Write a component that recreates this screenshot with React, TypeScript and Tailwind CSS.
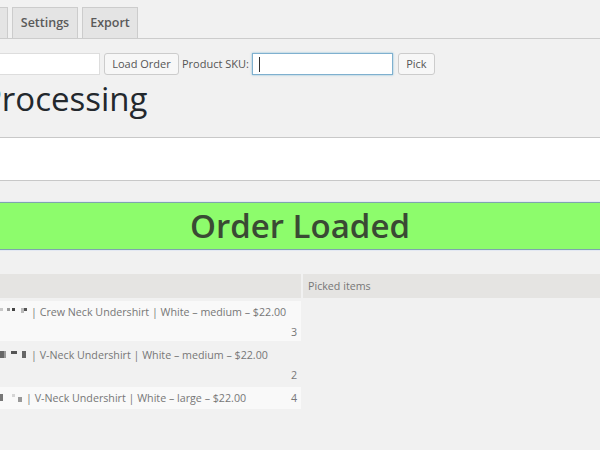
import React from "react";

function Blob({ w, c, h = 6, mt = 0, ml = 0 }: { w: number; c: string; h?: number; mt?: number; ml?: number }) {
  return <span className="inline-block shrink-0" style={{ width: w, height: h, background: c, marginTop: mt, marginLeft: ml }} />;
}

export default function App() {
  return (
    <div
      className="w-[600px] h-[450px] overflow-hidden bg-[#f1f1f1] text-[#555]"
      style={{ fontFamily: '"Open Sans", "Liberation Sans", sans-serif' }}
    >
      {/* Tabs */}
      <div className="flex items-end h-[39px] border-b border-[#cccccc] pt-[8px]">
        <div className="-ml-[62px] w-[70px] h-[31px] border border-b-0 border-[#cccccc] bg-[#e4e4e4]" />
        <div className="ml-[4px] w-[66px] h-[31px] border border-b-0 border-[#cccccc] bg-[#e4e4e4] flex items-center justify-center pt-[1px] text-[12.5px] font-semibold text-[#5a5a5a]">
          Settings
        </div>
        <div className="ml-[4px] w-[56px] h-[31px] border border-b-0 border-[#cccccc] bg-[#e4e4e4] flex items-center justify-center pt-[1px] text-[12.5px] font-semibold text-[#5a5a5a]">
          Export
        </div>
      </div>

      {/* Form row */}
      <div className="flex items-center mt-[14px] h-[22px]">
        <div className="-ml-[20px] w-[120px] h-[22px] bg-white border border-[#dddddd]" />
        <div className="ml-[4px] w-[75px] h-[22px] bg-[#f7f7f7] border border-[#cccccc] rounded-[3px] flex items-center justify-center text-[11px] text-[#555]">
          Load Order
        </div>
        <div className="ml-[3px] text-[11px] text-[#555]">Product SKU:</div>
        <div className="ml-[3px] w-[141px] h-[22px] bg-white border border-[#7fb0cf] shadow-[0_0_2px_rgba(30,140,190,0.5)] flex items-center pl-[6px]">
          <span className="w-px h-[15px] bg-[#333]" />
        </div>
        <div className="ml-[5px] w-[37px] h-[22px] bg-[#f7f7f7] border border-[#cccccc] rounded-[3px] flex items-center justify-center text-[11px] text-[#555]">
          Pick
        </div>
      </div>

      {/* Heading */}
      <div className="-ml-[18px] mt-[2px] text-[33px] leading-[44px] text-[#23282d]">Processing</div>

      {/* White box */}
      <div className="mt-[16px] h-[44px] bg-white border-y border-[#c8c8c8]" />

      {/* Green box */}
      <div className="mt-[21px] shadow-[0_0_0_1px_#e3e8f3]">
        <div className="h-[48px] bg-[#8dfc6c] border-y border-[#7ea5ae] flex items-center justify-center text-[33px] font-semibold text-[#3a4a34]">
          Order Loaded
        </div>
      </div>

      {/* Table */}
      <div className="mt-[24px] grid grid-cols-[301px_1fr] gap-x-[2px] gap-y-[3px] text-[10.7px] text-[#777]">
        <div className="h-[24px] bg-[#e5e4e2]" />
        <div className="h-[24px] bg-[#e5e4e2] flex items-center pl-[5px] text-[#777]">Picked items</div>

        <div className="h-[40px] bg-[#f9f9f9] pr-[4px] flex flex-col">
          <div className="flex items-center h-[22px]">
            <div className="w-[31px] shrink-0 flex items-start h-[8px]">
              <Blob w={3} c="#c8c8c8" h={3} />
              <Blob w={3} c="#999" h={3} ml={4} />
              <Blob w={3} c="#444" h={3} ml={2} />
              <Blob w={3} c="#bbb" h={5} ml={6} />
              <Blob w={3} c="#555" h={3} />
            </div>
            <span>| Crew Neck Undershirt | White – medium – $22.00</span>
          </div>
          <div className="text-right leading-[18px]">3</div>
        </div>
        <div />

        <div className="h-[40px] bg-[#f1f1f1] pr-[4px] flex flex-col">
          <div className="flex items-center h-[22px]">
            <div className="w-[31px] shrink-0 flex items-start h-[8px]">
              <Blob w={4} c="#666" h={7} />
              <Blob w={2} c="#999" h={7} />
              <Blob w={6} c="#555" h={3} ml={5} />
              <Blob w={4} c="#666" h={7} ml={5} />
            </div>
            <span>| V-Neck Undershirt | White – medium – $22.00</span>
          </div>
          <div className="text-right leading-[18px]">2</div>
        </div>
        <div />

        <div className="h-[22px] bg-[#f9f9f9] pr-[4px] flex items-center justify-between">
          <div className="flex items-center">
            <div className="w-[26px] shrink-0 flex items-start h-[8px]">
              <Blob w={3} c="#777" h={7} />
              <Blob w={3} c="#d5d5d5" h={3} ml={9} />
              <Blob w={4} c="#999" h={5} ml={3} mt={3} />
            </div>
            <span>| V-Neck Undershirt | White – large – $22.00</span>
          </div>
          <span>4</span>
        </div>
        <div />
      </div>
    </div>
  );
}
